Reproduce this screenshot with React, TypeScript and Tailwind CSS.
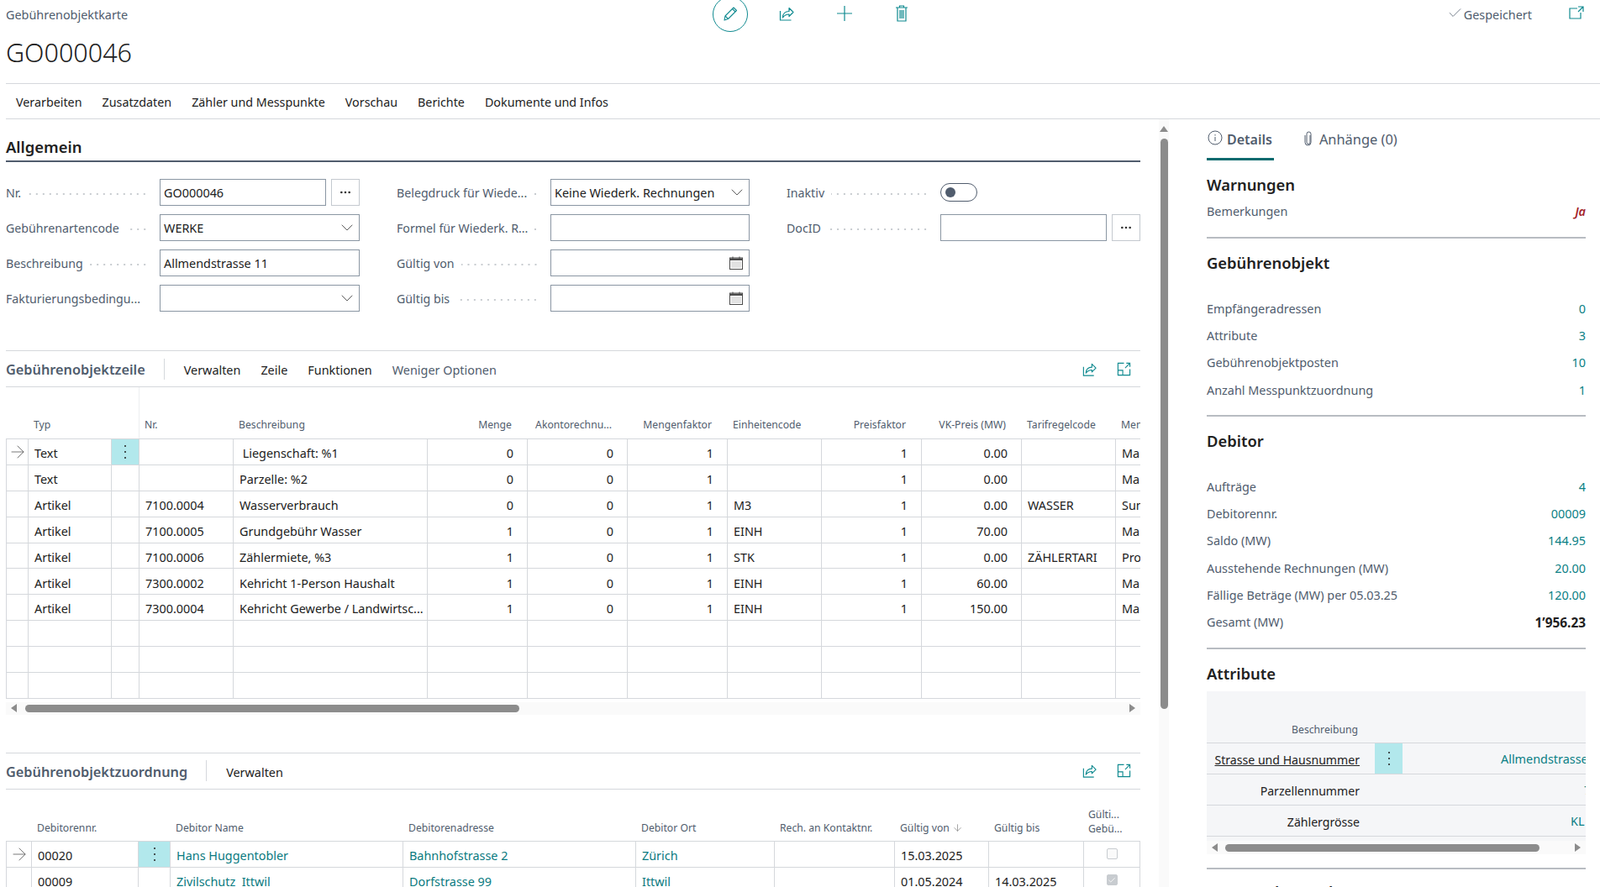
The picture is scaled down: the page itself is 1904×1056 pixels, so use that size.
import React from 'react';
import { ArrowDown, ArrowRight, Check, ChevronDown, Ellipsis } from 'lucide-react';

const font = "font-['Open_Sans',sans-serif]";

const ShareIcon = ({ className = '' }: { className?: string }) => (
  <svg viewBox="0 0 20 20" className={className} fill="none" stroke="#0f8a90" strokeWidth="1.2">
    <path d="M2.5 7v11h13" />
    <path d="M5.5 15c0-5 3-7.5 7.5-7.5V3.5l5 5-5 5V11c-3 0-5.5 1-7.5 4z" strokeLinejoin="round" />
  </svg>
);

const ExpandIcon = ({ className = '' }: { className?: string }) => (
  <svg viewBox="0 0 18 18" className={className} fill="none" stroke="#0f8a90" strokeWidth="1.2">
    <path d="M9 1.5H1.5v15H16.5V9" />
    <path d="M1.5 10.5H7.5V16.5" />
    <path d="M10.5 7.5L16.5 1.5M12 1.5h4.5V6" />
  </svg>
);

const CalendarIcon = () => (
  <svg viewBox="0 0 16 16" className="w-[16px] h-[16px]" fill="none">
    <rect x="0.5" y="2" width="15" height="13.5" fill="#fff" stroke="#4b4b4b" />
    <rect x="1" y="2.5" width="14" height="2.5" fill="#4b4b4b" />
    <path d="M4 0.5v3M12 0.5v3" stroke="#4b4b4b" />
    <path d="M2.5 7h11M2.5 9h11M2.5 11h11M2.5 13h11" stroke="#8a8a8a" strokeDasharray="1 1" />
  </svg>
);

const RowMenu = () => (
  <svg viewBox="0 0 4 18" className="w-[4px] h-[18px]" fill="#212121">
    <circle cx="2" cy="2" r="1" />
    <circle cx="2" cy="9" r="1" />
    <circle cx="2" cy="16" r="1" />
  </svg>
);

const RowArrow = () => <ArrowRight size={24} strokeWidth={0.8} className="text-[#555]" />;

function FieldLabel({ text }: { text: string }) {
  return (
    <div className="flex items-center w-full pt-[2px] text-[14.2px] text-[#505c6d]">
      <span className="whitespace-nowrap">{text}</span>
      <div className="flex-1 min-w-0 h-[4px] ml-[8px] mr-[14px] mt-[3px] bg-[radial-gradient(circle,#c8ccd0_1px,transparent_1.2px)] bg-[length:8px_4px] bg-right" />
    </div>
  );
}

const boxCls = 'h-[32px] border border-[#8a96a3] bg-white flex items-center text-[14.4px] text-[#212121] pl-[4px]';

function TextBox({ value = '', kind }: { value?: string; kind?: 'select' | 'date' }) {
  return (
    <div className={`${boxCls} justify-between w-full ${kind === 'select' ? 'pr-[2px]' : 'pr-[7px]'}`}>
      <span className="whitespace-nowrap pt-[2px]">{value}</span>
      {kind === 'select' && <ChevronDown size={24} strokeWidth={0.8} className="text-[#333]" />}
      {kind === 'date' && <CalendarIcon />}
    </div>
  );
}

function LookupBox({ value = '' }: { value?: string }) {
  return (
    <div className="flex gap-[6px] w-full">
      <div className={`${boxCls} flex-1`}>
        <span className="pt-[2px]">{value}</span>
      </div>
      <div className="w-[34px] h-[32px] border border-[#c4c9cf] flex items-center justify-center">
        <Ellipsis size={16} className="text-[#333]" />
      </div>
    </div>
  );
}

function SectionBar({ title, items, dim }: { title: string; items: string[]; dim?: string }) {
  return (
    <div className="h-[44px] border-y border-[#d5d8dc] flex items-center">
      <span className="text-[16.3px] font-semibold text-[#505c6d] whitespace-nowrap pt-[3px]">{title}</span>
      <div className="w-px h-[25px] bg-[#d5d8dc] ml-[22px] mr-[23px]" />
      <div className="flex gap-[24px] text-[14.4px] text-[#212121] flex-1 pt-[3px]">
        {items.map((i) => (
          <span key={i}>{i}</span>
        ))}
        {dim && <span className="text-[#505c6d]">{dim}</span>}
      </div>
      <ShareIcon className="w-[19px] h-[19px]" />
      <ExpandIcon className="w-[17px] h-[17px] ml-[23px] mr-[11px]" />
    </div>
  );
}

const lineCols = [26, 99, 33, 112, 231, 119, 119, 119, 112, 119, 119, 112, 30];
const lineHead: [string, string][] = [
  ['', 'l'], ['Typ', 'l'], ['', 'l'], ['Nr.', 'l'], ['Beschreibung', 'l'], ['Menge', 'r'], ['Akontorechnu...', 'r'],
  ['Mengenfaktor', 'r'], ['Einheitencode', 'l'], ['Preisfaktor', 'r'], ['VK-Preis (MW)', 'r'], ['Tarifregelcode', 'l'], ['Men', 'l'],
];
const lineRows = [
  ['Text', '', ' Liegenschaft: %1', '0', '0', '1', '', '1', '0.00', '', 'Ma'],
  ['Text', '', 'Parzelle: %2', '0', '0', '1', '', '1', '0.00', '', 'Ma'],
  ['Artikel', '7100.0004', 'Wasserverbrauch', '0', '0', '1', 'M3', '1', '0.00', 'WASSER', 'Sum'],
  ['Artikel', '7100.0005', 'Grundgebühr Wasser', '1', '0', '1', 'EINH', '1', '70.00', '', 'Ma'],
  ['Artikel', '7100.0006', 'Zählermiete, %3', '1', '0', '1', 'STK', '1', '0.00', 'ZÄHLERTARI', 'Pro'],
  ['Artikel', '7300.0002', 'Kehricht 1-Person Haushalt', '1', '0', '1', 'EINH', '1', '60.00', '', 'Ma'],
  ['Artikel', '7300.0004', 'Kehricht Gewerbe / Landwirtsc...', '1', '0', '1', 'EINH', '1', '150.00', '', 'Ma'],
  ['', '', '', '', '', '', '', '', '', '', ''],
  ['', '', '', '', '', '', '', '', '', '', ''],
  ['', '', '', '', '', '', '', '', '', '', ''],
];
const lineAlign = ['l', 'l', 'l', 'r', 'r', 'r', 'l', 'r', 'r', 'l', 'l'];

const Cell = ({ children, right, center, w, last }: { children?: React.ReactNode; right?: boolean; center?: boolean; w: number; last?: boolean }) => (
  <div
    style={{ width: w }}
    className={`shrink-0 h-full flex items-center overflow-hidden whitespace-pre text-[14.4px] ${last ? '' : 'border-r border-[#d5d8dc]'} ${center ? 'justify-center' : right ? 'justify-end pr-[16px] pt-[4px]' : 'pl-[7px] pt-[4px]'}`}
  >
    {children}
  </div>
);

function HScroll({ thumbLeft, thumbWidth, height }: { thumbLeft: string; thumbWidth: string; height: string }) {
  return (
    <div className={`${height} bg-[#fafafa] flex items-center`}>
      <div className="w-0 h-0 ml-[6px] border-y-[5px] border-y-transparent border-r-[7px] border-r-[#8c8c8c]" />
      <div className={`h-[9px] rounded-full bg-[#8c8c8c] ${thumbLeft} ${thumbWidth}`} />
      <div className="ml-auto mr-[6px] w-0 h-0 border-y-[5px] border-y-transparent border-l-[7px] border-l-[#8c8c8c]" />
    </div>
  );
}

function LinesTable() {
  const w = lineCols;
  return (
    <div className="overflow-hidden w-[1350px]">
      <div className="h-[61px] flex items-end pb-[7px] text-[12.2px] text-[#505c6d] relative">
        <div className="absolute left-[158px] top-0 bottom-0 w-px bg-[#eceef0]" />
        {lineHead.map(([t, a], i) => (
          <div
            key={i}
            style={{ width: w[i] }}
            className={`shrink-0 whitespace-nowrap overflow-hidden ${a === 'r' ? 'text-right pr-[18px]' : 'pl-[7px]'}`}
          >
            {t}
          </div>
        ))}
      </div>
      <div className="border-l border-t border-[#d5d8dc] text-[#212121]">
        {lineRows.map((r, ri) => (
          <div key={ri} className="h-[30.9px] flex border-b border-[#d5d8dc]">
            <Cell w={w[0]} center>{ri === 0 && <RowArrow />}</Cell>
            <Cell w={w[1]}>{r[0]}</Cell>
            <div style={{ width: w[2] }} className={`shrink-0 border-r border-[#d5d8dc] flex items-center justify-center ${ri === 0 ? 'bg-[#b2e8ec]' : ''}`}>
              {ri === 0 && <RowMenu />}
            </div>
            {r.slice(1).map((c, ci) => (
              <Cell key={ci} w={w[ci + 3]} right={lineAlign[ci + 1] === 'r'} last={ci === r.length - 2}>
                {c}
              </Cell>
            ))}
          </div>
        ))}
      </div>
      <div className="mt-[4px]">
        <HScroll height="h-[15px]" thumbLeft="ml-[10px]" thumbWidth="w-[588px]" />
      </div>
    </div>
  );
}

const assignCols = [30, 127, 38, 277, 277, 165, 143, 112, 113, 68];

function AssignTable() {
  const w = assignCols;
  const heads = ['', 'Debitorennr.', '', 'Debitor Name', 'Debitorenadresse', 'Debitor Ort', 'Rech. an Kontaktnr.', 'Gültig von', 'Gültig bis'];
  const rows = [
    ['00020', 'Hans Huggentobler', 'Bahnhofstrasse 2', 'Zürich', '', '15.03.2025', '', false],
    ['00009', 'Zivilschutz  Ittwil', 'Dorfstrasse 99', 'Ittwil', '', '01.05.2024', '14.03.2025', true],
  ] as const;
  return (
    <div className="w-[1350px]">
      <div className="h-[61px] flex items-end pb-[6px] text-[12.2px] text-[#505c6d]">
        {heads.map((t, i) => (
          <div key={i} style={{ width: w[i] }} className="shrink-0 pl-[7px] whitespace-nowrap flex items-center gap-[3px]">
            {t}
            {t === 'Gültig von' && <ArrowDown size={13} strokeWidth={1.2} className="text-[#777]" />}
          </div>
        ))}
        <div className="pl-[6px] leading-[17px]">
          Gülti...
          <br />
          Gebü...
        </div>
      </div>
      <div className="border-l border-t border-r border-[#d5d8dc]">
        {rows.map((r, ri) => (
          <div key={ri} className="h-[31px] flex border-b border-[#d5d8dc] text-[#212121]">
            <Cell w={w[0]} center>{ri === 0 && <RowArrow />}</Cell>
            <Cell w={w[1]}>{r[0]}</Cell>
            <div style={{ width: w[2] }} className={`shrink-0 border-r border-[#d5d8dc] flex items-center justify-center ${ri === 0 ? 'bg-[#b2e8ec]' : ''}`}>
              {ri === 0 && <RowMenu />}
            </div>
            <Cell w={w[3]}><span className="text-[#0a7a80]">{r[1]}</span></Cell>
            <Cell w={w[4]}><span className="text-[#0a7a80]">{r[2]}</span></Cell>
            <Cell w={w[5]}><span className="text-[#0a7a80]">{r[3]}</span></Cell>
            <Cell w={w[6]}>{r[4]}</Cell>
            <Cell w={w[7]}>{r[5]}</Cell>
            <Cell w={w[8]}>{r[6]}</Cell>
            <div className="flex-1 flex items-center justify-center">
              <div className={`w-[13px] h-[13px] rounded-[2px] border border-[#c8ccd0] flex items-center justify-center ${r[7] ? 'bg-[#c8ccd0]' : 'bg-[#fafafa]'}`}>
                {r[7] && <Check size={10} strokeWidth={2} className="text-white" />}
              </div>
            </div>
          </div>
        ))}
      </div>
    </div>
  );
}

function PanelRow({ label, value, kind = 'link' }: { label: string; value: string; kind?: 'link' | 'bold' | 'warn' }) {
  const cls = kind === 'bold' ? 'font-bold text-[15.4px] text-[#212121]' : kind === 'warn' ? 'font-semibold italic text-[#a4262c]' : 'text-[#0a7f85]';
  return (
    <div className="flex justify-between items-center text-[14.4px] h-[32.3px]">
      <span className="text-[#505c6d]">{label}</span>
      <span className={cls}>{value}</span>
    </div>
  );
}

function PanelSection({ title, children, after = 'mb-[24px]' }: { title: string; children: React.ReactNode; after?: string }) {
  return (
    <div className="border-b-2 border-[#b8bcc2] pb-[14px] mb-[15px]">
      <h3 className={`text-[18.4px] font-semibold text-[#212121] leading-[28px] ${after}`}>{title}</h3>
      {children}
    </div>
  );
}

function AttributeGrid() {
  const rows = [
    ['Strasse und Hausnummer', 'Allmendstrasse', true],
    ['Parzellennummer', '7', false],
    ['Zählergrösse', 'KL', false],
  ] as const;
  return (
    <div className="bg-[#f5f6f8] overflow-hidden mb-[2px]">
      <div className="h-[62px] flex items-end pb-[6px] text-[12.2px] text-[#505c6d] border-b border-[#d5d8dc] whitespace-nowrap">
        <div className="w-[180px] text-right shrink-0">Beschreibung</div>
        <div className="flex-1 pl-[422px] overflow-hidden">W</div>
      </div>
      {rows.map(([a, b, first], i) => (
        <div key={i} className="h-[37px] flex items-center border-b border-[#d5d8dc] text-[14.1px] whitespace-nowrap">
          <div className="w-[182px] shrink-0 text-right pt-[2px]">
            <span className={first ? 'underline text-[#212121]' : 'text-[#212121]'}>{a}</span>
          </div>
          <div className={`w-[33px] ml-[18px] h-full shrink-0 flex items-center justify-center ${first ? 'bg-[#b2e8ec]' : ''}`}>
            {first && <RowMenu />}
          </div>
          <div className="flex-1 overflow-hidden text-[#0a7f85] text-[14.4px] pt-[2px]">
            <div className={i === 0 ? 'pl-[117px]' : i === 1 ? 'pl-[216px]' : 'pl-[200px]'}>{b}</div>
          </div>
        </div>
      ))}
      <div className="mt-[5px]">
        <HScroll height="h-[16px]" thumbLeft="ml-[9px]" thumbWidth="w-[374px]" />
      </div>
    </div>
  );
}

const navItems = ['Verarbeiten', 'Zusatzdaten', 'Zähler und Messpunkte', 'Vorschau', 'Berichte', 'Dokumente und Infos'];

export default function App() {
  return (
    <div className={`${font} h-[1056px] w-[1904px] overflow-hidden bg-white text-[#212121]`}>
      {/* Kopfbereich */}
      <div className="ml-[7px] h-[100px] border-b border-[#d5d8dc] flex flex-col">
        <div className="flex items-start h-[38px]">
          <span className="w-[841px] shrink-0 pt-[7px] text-[14.4px] text-[#505c6d]">Gebührenobjektkarte</span>
          <div className="flex items-center -mt-[4px]">
            <div className="w-[42px] h-[42px] rounded-full border border-[#0f8a90] flex items-center justify-center">
              <svg viewBox="0 0 20 20" className="w-[20px] h-[20px]" fill="none" stroke="#0f8a90" strokeWidth="1.1" strokeLinejoin="round">
                <path d="M3 17l1-5L14 2l3.5 3.5-10 10z" />
                <path d="M12.5 3.5l3.5 3.5M4 12l3.5 3.5" />
              </svg>
            </div>
            <ShareIcon className="w-[20px] h-[20px] ml-[36px] -mt-[2px]" />
            <svg viewBox="0 0 20 20" className="w-[20px] h-[20px] ml-[49px] -mt-[2px]" stroke="#0f8a90" strokeWidth="1.2">
              <path d="M10 1v18M1 10h18" />
            </svg>
            <svg viewBox="0 0 16 20" className="w-[16px] h-[20px] ml-[50px] -mt-[2px]" fill="none" stroke="#0f8a90" strokeWidth="1.2">
              <path d="M1 3h14M5.5 3V1h5v2M3 3v16h10V3M6 6v10M8 6v10M10 6v10" />
            </svg>
          </div>
          <div className="ml-auto flex items-center pt-[7px] text-[14.4px] text-[#505c6d] mr-[44px]">
            <Check size={19} strokeWidth={1} className="mr-[1px] -mt-[4px]" />
            Gespeichert
          </div>
          <svg viewBox="0 0 18 18" className="w-[18px] h-[18px] mt-[7px] mr-[19px]" fill="none" stroke="#0f8a90" strokeWidth="1.2">
            <path d="M10 3H1v12h13V8M11 1h6v6M17 1l-6 6" />
          </svg>
        </div>
        <h1 className="text-[30.5px] font-light leading-[40px] mt-[4px] text-[#212121]">GO000046</h1>
      </div>
      {/* Aktionsleiste */}
      <div className="ml-[7px] h-[42px] border-b border-[#d5d8dc] flex items-center pl-[12px] pt-[2px] gap-[24px] text-[14.3px]">
        {navItems.map((n) => (
          <span key={n}>{n}</span>
        ))}
      </div>
      <div className="flex">
        <main className="ml-[7px] w-[1350px] shrink-0">
          <div className="h-[51px] border-b-2 border-[#505c6d] pt-[19px] text-[18.4px] leading-[28px] font-semibold">Allgemein</div>
          <div className="mt-[20px] grid grid-cols-[183px_238px_44px_183px_237px_44px_183px_238px] gap-y-[10px] items-center">
            <FieldLabel text="Nr." />
            <LookupBox value="GO000046" />
            <div />
            <FieldLabel text="Belegdruck für Wiede..." />
            <TextBox value="Keine Wiederk. Rechnungen" kind="select" />
            <div />
            <FieldLabel text="Inaktiv" />
            <div className="w-[44px] h-[22px] rounded-full border border-[#505c6d] flex items-center pl-[5px]">
              <div className="w-[12px] h-[12px] rounded-full bg-[#505c6d]" />
            </div>

            <FieldLabel text="Gebührenartencode" />
            <TextBox value="WERKE" kind="select" />
            <div />
            <FieldLabel text="Formel für Wiederk. R..." />
            <TextBox />
            <div />
            <FieldLabel text="DocID" />
            <LookupBox />

            <FieldLabel text="Beschreibung" />
            <TextBox value="Allmendstrasse 11" />
            <div />
            <FieldLabel text="Gültig von" />
            <TextBox kind="date" />
            <div />
            <div />
            <div />

            <FieldLabel text="Fakturierungsbedingu..." />
            <TextBox kind="select" />
            <div />
            <FieldLabel text="Gültig bis" />
            <TextBox kind="date" />
          </div>
          <div className="mt-[46px]">
            <SectionBar title="Gebührenobjektzeile" items={['Verwalten', 'Zeile', 'Funktionen']} dim="Weniger Optionen" />
          </div>
          <LinesTable />
          <div className="mt-[45px]">
            <SectionBar title="Gebührenobjektzuordnung" items={['Verwalten']} />
          </div>
          <AssignTable />
        </main>
        {/* Scrollbar */}
        <div className="ml-[22px] w-[12px] shrink-0 flex flex-col items-center bg-[#fafafa] h-[915px] pt-[8px]">
          <div className="w-0 h-0 border-x-[5px] border-x-transparent border-b-[7px] border-b-[#8c8c8c]" />
          <div className="w-[9px] h-[679px] rounded-full bg-[#8c8c8c] mt-[8px]" />
        </div>
        <aside className="ml-[45px] w-[451px] shrink-0">
          <div className="h-[49px] flex items-start pt-[12px] text-[16px] text-[#505c6d]">
            <div className="relative h-[37px] flex items-start font-semibold pl-[1px]">
              <svg viewBox="0 0 18 18" className="w-[18px] h-[18px] mr-[5px] mt-[1px]" fill="none" stroke="#505c6d" strokeWidth="1">
                <circle cx="9" cy="9" r="8" />
                <path d="M9 8v5M9 5v1.5" />
              </svg>
              Details
              <div className="absolute left-0 -right-[2px] bottom-0 h-[3px] bg-[#0b6a6e]" />
            </div>
            <svg viewBox="0 0 10 18" className="w-[10px] h-[18px] ml-[38px] mt-[2px] mr-[8px]" fill="none" stroke="#505c6d" strokeWidth="1">
              <path d="M7 5v8.5a2 2 0 0 1-4 0V3.5a2.5 2.5 0 0 1 5 0V13.5a3.5 3.5 0 0 1-7 0V5" />
            </svg>
            <span className="text-[16.4px]">Anhänge (0)</span>
          </div>
          <div className="pt-[15px]">
            <PanelSection title="Warnungen" after="mb-[2px]">
              <PanelRow label="Bemerkungen" value="Ja" kind="warn" />
            </PanelSection>
            <PanelSection title="Gebührenobjekt">
              <PanelRow label="Empfängeradressen" value="0" />
              <PanelRow label="Attribute" value="3" />
              <PanelRow label="Gebührenobjektposten" value="10" />
              <PanelRow label="Anzahl Messpunktzuordnung" value="1" />
            </PanelSection>
            <PanelSection title="Debitor">
              <PanelRow label="Aufträge" value="4" />
              <PanelRow label="Debitorennr." value="00009" />
              <PanelRow label="Saldo (MW)" value="144.95" />
              <PanelRow label="Ausstehende Rechnungen (MW)" value="20.00" />
              <PanelRow label="Fällige Beträge (MW) per 05.03.25" value="120.00" />
              <PanelRow label="Gesamt (MW)" value="1’956.23" kind="bold" />
            </PanelSection>
            <PanelSection title="Attribute" after="mb-[7px]">
              <AttributeGrid />
            </PanelSection>
            <h3 className="text-[18.4px] font-semibold leading-[28px] -mt-[2px]">Messpunktzuordnung</h3>
          </div>
        </aside>
      </div>
    </div>
  );
}
